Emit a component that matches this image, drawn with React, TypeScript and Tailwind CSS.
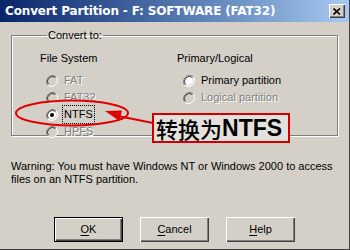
import React from 'react';

function Radio({ checked, disabled }: { checked?: boolean; disabled?: boolean }) {
  return (
    <svg width="12" height="12" viewBox="0 0 12 12" className="flex-shrink-0">
      <circle cx="6" cy="6" r="5.5" fill={disabled ? '#d4d0c8' : '#ffffff'} />
      <path d="M10.2 1.8 A6 6 0 0 0 1.8 10.2" fill="none" stroke="#808080" strokeWidth="1" />
      <path d="M9.5 2.5 A5 5 0 0 0 2.5 9.5" fill="none" stroke="#404040" strokeWidth="1" />
      <path d="M1.8 10.2 A6 6 0 0 0 10.2 1.8" fill="none" stroke="#ffffff" strokeWidth="1" />
      <path d="M2.5 9.5 A5 5 0 0 0 9.5 2.5" fill="none" stroke="#d4d0c8" strokeWidth="1" />
      {checked && <circle cx="6" cy="6" r="2" fill="#000" />}
    </svg>
  );
}

function Option({ label, checked, disabled, focused }: { label: string; checked?: boolean; disabled?: boolean; focused?: boolean }) {
  return (
    <div className="flex items-center h-[17px] gap-[6px]">
      <Radio checked={checked} disabled={disabled} />
      <span
        className={
          (disabled ? 'text-[#808080] [text-shadow:1px_1px_0_#fff] ' : 'text-black ') +
          (focused ? 'outline outline-1 outline-dotted outline-black px-[1px] -ml-[1px]' : '')
        }
      >
        {label}
      </span>
    </div>
  );
}

function Button({ label, hot, isDefault }: { label: string; hot: string; isDefault?: boolean }) {
  const rest = label.slice(1);
  return (
    <button
      className={
        'w-[69px] h-[25px] bg-[#d4d0c8] text-black flex items-center justify-center ' +
        (isDefault
          ? 'border border-black shadow-[inset_1px_1px_0_#fff,inset_-1px_-1px_0_#404040,inset_-2px_-2px_0_#808080]'
          : 'shadow-[inset_1px_1px_0_#fff,inset_-1px_-1px_0_#404040,inset_-2px_-2px_0_#808080]')
      }
    >
      <span className="underline underline-offset-2">{hot}</span>
      {rest}
    </button>
  );
}

export default function App() {
  return (
    <div className="relative w-[350px] h-[250px] bg-[#d4d0c8] text-[11px] font-['Liberation_Sans',sans-serif] border-r border-b border-[#404040] flex flex-col overflow-hidden">
      <div className="h-[22px] flex items-center justify-between pl-[5px] pr-[4px] bg-gradient-to-r from-[#0a246a] to-[#a6caf0]">
        <span className="text-white font-bold text-[12px] font-['DejaVu_Sans',sans-serif] tracking-[-0.15px]">
          Convert Partition - F: SOFTWARE (FAT32)
        </span>
        <div className="w-[16px] h-[14px] bg-[#d4d0c8] flex items-center justify-center shadow-[inset_1px_1px_0_#fff,inset_-1px_-1px_0_#404040,inset_-2px_-2px_0_#808080]">
          <svg width="8" height="7" viewBox="0 0 8 7">
            <path d="M0.5 0.5 L7 6.5 M7 0.5 L0.5 6.5" stroke="#000" strokeWidth="1.6" />
          </svg>
        </div>
      </div>

      <fieldset className="mx-[11px] mt-[5px] h-[109px] border border-[#808080] shadow-[1px_1px_0_#fff,inset_1px_1px_0_#fff] px-[28px] pt-[6px]">
        <legend className="px-[1px] ml-[7px] text-black">Convert to:</legend>
        <div className="flex">
          <div className="w-[137px]">
            <div className="mb-[6px]">File System</div>
            <div className="pl-[6px] flex flex-col">
              <Option label="FAT" disabled />
              <Option label="FAT32" disabled />
              <Option label="NTFS" checked focused />
              <Option label="HPFS" disabled />
            </div>
          </div>
          <div>
            <div className="mb-[6px]">Primary/Logical</div>
            <div className="pl-[6px] flex flex-col">
              <Option label="Primary partition" />
              <Option label="Logical partition" disabled />
            </div>
          </div>
        </div>
      </fieldset>

      <p className="mx-[11px] mt-[24px] leading-[13px] text-black">
        Warning: You must have Windows NT or Windows 2000 to access files on an NTFS partition.
      </p>

      <div className="mt-auto mb-[7px] flex gap-[17px] pl-[54px]">
        <Button label="OK" hot="O" isDefault />
        <Button label="Cancel" hot="C" />
        <Button label="Help" hot="H" />
      </div>

      <svg className="absolute left-0 top-0 pointer-events-none" width="350" height="250">
        <ellipse cx="72" cy="113" rx="56" ry="12.5" fill="none" stroke="#e00000" strokeWidth="2" />
        <line x1="118" y1="116" x2="153" y2="123" stroke="#e00000" strokeWidth="2" />
        <polygon points="105,111 122,110.5 119.5,121" fill="#e00000" />
      </svg>

      <div className="absolute left-[152px] top-[113px] w-[138px] h-[30px] border-2 border-[#d00000] bg-[#e4e1dc] flex items-center pl-[2px] text-black leading-none">
        <span className="text-[22px] font-['Noto_Sans_CJK_SC',sans-serif] font-medium">转换为</span>
        <span className="text-[23px] font-bold font-['Liberation_Sans',sans-serif]">NTFS</span>
      </div>
    </div>
  );
}
